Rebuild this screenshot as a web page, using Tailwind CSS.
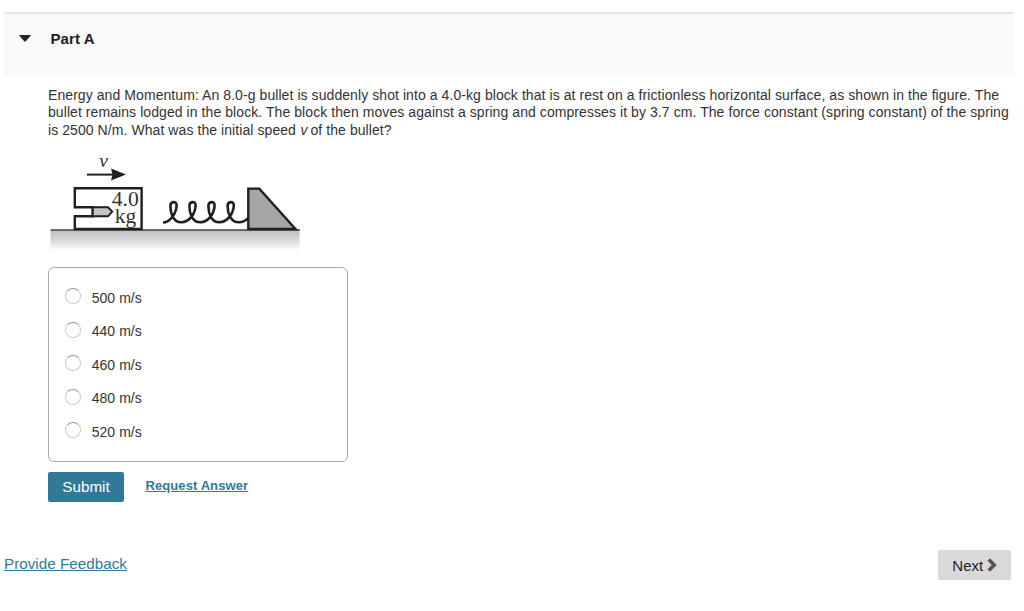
<!DOCTYPE html>
<html lang="en">
<head>
    <meta charset="UTF-8">
    <meta name="viewport" content="width=device-width, initial-scale=1.0">
    <title>Part A</title>
    <!-- Tailwind CSS for styling -->
    <script src="https://cdn.jsdelivr.net/npm/@tailwindcss/browser@4"></script>
</head>
<body class="bg-white text-[#333] font-['Liberation_Sans',sans-serif] pt-3">

    <!-- Part header -->
    <header class="ml-1 mr-2.5 h-[63px] flex items-start bg-[#f9f9f9] border-t-2 border-[#e6e6e6]">
        <svg class="ml-[15px] mt-[21px] w-3 h-[7px]" viewBox="0 0 12 7"><path d="M0.8 0H11.2Q12 0.2 11.4 1L6.8 6.2Q6 7 5.2 6.2L0.6 1Q0 0.2 0.8 0Z" fill="#222"/></svg>
        <h1 class="ml-[19.5px] mt-[15px] text-[15px] leading-5 font-bold tracking-[0.1px] text-[#222]">Part A</h1>
    </header>

    <main class="ml-12 pt-3">
        <!-- Question -->
        <p class="h-[52.5px] text-[14px] leading-[17.3px] tracking-[0.073px] whitespace-nowrap">
            <span class="block">Energy and Momentum: An 8.0-g bullet is suddenly shot into a 4.0-kg block that is at rest on a frictionless horizontal surface, as shown in the figure. The</span>
            <span class="block">bullet remains lodged in the block. The block then moves against a spring and compresses it by 3.7 cm. The force constant (spring constant) of the spring</span>
            <span class="block">is 2500 N/m. What was the initial speed <i class="ml-[0.5px] -mr-px">v</i> of the bullet?</span>
        </p>

        <!-- Figure: bullet, block, spring and stop -->
        <svg class="mt-[8.5px] ml-0.5 w-[250px] h-[105px]" viewBox="50 148 250 105" fill="none" stroke="#231f20" stroke-width="2">
            <defs>
                <linearGradient id="ground" x1="0" y1="0" x2="0" y2="1">
                    <stop offset="0" stop-color="#bdbdbd"/>
                    <stop offset="0.5" stop-color="#dadada"/>
                    <stop offset="1" stop-color="#fff"/>
                </linearGradient>
            </defs>
            <rect x="50.5" y="230" width="249" height="21" fill="url(#ground)" stroke="none"/>
            <path d="M50.5 230H300" stroke="#444" stroke-width="1.5"/>
            <path d="M87 174.6H113"/>
            <path d="M111 168.6L126 174.6L111 180.6L112.5 174.6Z" fill="#231f20" stroke="none"/>
            <path d="M74.8 188.2H141.6V229H74.8V216.3H92.7V207.2H74.8Z" fill="#fff" stroke-width="2.4"/>
            <path d="M92.7 207.2H108L112.2 211.6L108 216.3H92.7Z" fill="#c4c4c4"/>
            <path d="M163 222.5C170 222.5 176.6 213 176.6 205C176.6 201 170.4 201 170.4 206C170.4 213 173 222.3 181.5 222.3C189.5 222.3 195.6 213 195.6 205C195.6 201 189.4 201 189.4 206C189.4 213 192 222.3 200.5 222.3C208.5 222.3 214.6 213 214.6 205C214.6 201 208.4 201 208.4 206C208.4 213 211 222.3 219.5 222.3C227.5 222.3 233.8 213 233.8 205C233.8 201 227.6 201 227.6 206C227.6 213 230.5 222.3 239 222.3Q244.5 222.3 248 218" stroke-width="2.6"/>
            <path d="M248.3 188.6H259.3L295.5 229H248.3Z" fill="#a6a6a6" stroke-width="2.4"/>
            <g fill="#333" stroke="none" font-family="Liberation Serif, serif" font-size="20.5">
                <text x="99.3" y="166.5" font-style="italic" font-size="19.5">v</text>
                <text x="111.7" y="206" textLength="27" lengthAdjust="spacingAndGlyphs">4.0</text>
                <text x="114.7" y="222.7" textLength="21.5" lengthAdjust="spacingAndGlyphs">kg</text>
            </g>
        </svg>

        <!-- Answer choices -->
        <div class="mt-[14px] w-[300px] h-[195px] border border-[#aaa] rounded-md pl-4 pt-[13.7px] text-[14px] tracking-[0.05px]">
            <label class="flex items-center h-[33.45px] gap-[10.7px]"><span class="size-4 mb-[4px] rounded-full border border-[#ccc] border-t-[#999]"></span>500 m/s</label>
            <label class="flex items-center h-[33.45px] gap-[10.7px]"><span class="size-4 mb-[4px] rounded-full border border-[#ccc] border-t-[#999]"></span>440 m/s</label>
            <label class="flex items-center h-[33.45px] gap-[10.7px]"><span class="size-4 mb-[4px] rounded-full border border-[#ccc] border-t-[#999]"></span>460 m/s</label>
            <label class="flex items-center h-[33.45px] gap-[10.7px]"><span class="size-4 mb-[4px] rounded-full border border-[#ccc] border-t-[#999]"></span>480 m/s</label>
            <label class="flex items-center h-[33.45px] gap-[10.7px]"><span class="size-4 mb-[4px] rounded-full border border-[#ccc] border-t-[#999]"></span>520 m/s</label>
        </div>

        <div class="mt-2.5 flex items-start">
            <button class="w-[76px] h-[30px] rounded-[2px] bg-[#317999] text-white text-[15.2px]">Submit</button>
            <a href="#" class="ml-[21.5px] mt-1 text-[13px] leading-5 font-bold tracking-[0.09px] underline text-[#317999]">Request Answer</a>
        </div>
    </main>

    <footer class="mt-12 ml-1 mr-[13px] flex items-start justify-between">
        <a href="#" class="mt-0.5 text-[15.25px] leading-6 underline text-[#317999]">Provide Feedback</a>
        <button class="w-[73px] h-[30px] rounded-[2px] bg-[#d9d9d9] text-[#222] text-[15px] flex items-center justify-center gap-[3.5px]">
            <span class="pt-0.5">Next</span>
            <svg class="w-2.5 h-3.5" viewBox="0 0 10 14" fill="none" stroke="#555" stroke-width="3.6"><path d="M1.8 1.5L7.2 7L1.8 12.5"/></svg>
        </button>
    </footer>

</body>
</html>
